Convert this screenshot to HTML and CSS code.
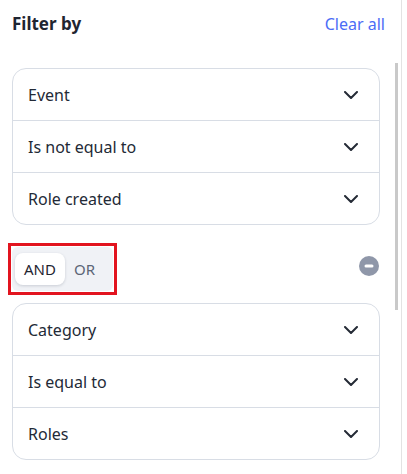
FILE: index.html
```html
<!DOCTYPE html>
<html lang="en">
<head>
<meta charset="utf-8">
<link rel="stylesheet" href="styles.css">
</head>
<body>
<div class="panel">
  <div class="header">
    <span class="title">Filter by</span>
    <a class="clear">Clear all</a>
  </div>

  <div class="card">
    <div class="row"><span>Event</span><svg class="chev" viewBox="0 0 14 8"><path d="M1 1l6 6 6-6"/></svg></div>
    <div class="row"><span>Is not equal to</span><svg class="chev" viewBox="0 0 14 8"><path d="M1 1l6 6 6-6"/></svg></div>
    <div class="row"><span>Role created</span><svg class="chev" viewBox="0 0 14 8"><path d="M1 1l6 6 6-6"/></svg></div>
  </div>

  <div class="logic">
    <div class="highlight">
      <div class="toggle">
        <span class="opt active">AND</span>
        <span class="opt">OR</span>
      </div>
    </div>
    <svg class="remove" viewBox="0 0 20 20"><circle cx="10" cy="10" r="10"/><rect x="5.5" y="8.5" width="9" height="3" rx="1.5"/></svg>
  </div>

  <div class="card">
    <div class="row"><span>Category</span><svg class="chev" viewBox="0 0 14 8"><path d="M1 1l6 6 6-6"/></svg></div>
    <div class="row"><span>Is equal to</span><svg class="chev" viewBox="0 0 14 8"><path d="M1 1l6 6 6-6"/></svg></div>
    <div class="row"><span>Roles</span><svg class="chev" viewBox="0 0 14 8"><path d="M1 1l6 6 6-6"/></svg></div>
  </div>

  <div class="scroll-thumb"></div>
</div>
</body>
</html>
```

FILE: styles.css
```css
* { box-sizing: border-box; }
html, body { margin: 0; padding: 0; background: #fff; }
body {
  font-family: "Noto Sans", "Open Sans", sans-serif;
  color: #232a36;
  width: 407px;
  height: 474px;
  overflow: hidden;
}
.panel {
  position: relative;
  width: 402px;
  height: 474px;
  border-right: 1px solid #e3e3e3;
  padding: 12px 0 0 12px;
}
.header {
  display: flex;
  justify-content: space-between;
  align-items: center;
  width: 373px;
  height: 24px;
  margin-bottom: 32px;
}
.title {
  font-weight: 700;
  font-size: 17px;
  line-height: 24px;
  color: #1f2531;
}
.clear {
  font-size: 16px;
  line-height: 24px;
  color: #4b6cf6;
}
.card {
  width: 368px;
  border: 1px solid #d8dde5;
  border-radius: 14px;
  overflow: hidden;
}
.row {
  display: flex;
  align-items: center;
  justify-content: space-between;
  height: 52px;
  padding: 0 21px 0 15px;
  font-size: 16px;
  border-top: 1px solid #d8dde5;
}
.row:first-child { border-top: none; height: 51px; }
.chev {
  width: 14px;
  height: 8px;
  fill: none;
  stroke: #252b36;
  stroke-width: 2;
  stroke-linecap: round;
  stroke-linejoin: round;
}
.logic {
  display: flex;
  justify-content: space-between;
  align-items: center;
  width: 368px;
  margin: 18px 0 8px -4px;
  padding-right: 0;
}
.highlight {
  border: 3px solid #e2141f;
  padding: 1px;
  width: 109px;
  height: 52px;
}
.toggle {
  display: flex;
  align-items: center;
  gap: 0;
  height: 100%;
  background: #f0f2f6;
  border-radius: 6px;
  padding: 2px 3px;
}
.opt {
  font-size: 15px;
  line-height: 32px;
  padding: 0 9px;
  color: #5d6677;
}
.opt.active {
  background: #fff;
  color: #1f2531;
  border-radius: 8px;
  box-shadow: 0 1px 3px rgba(30, 40, 60, 0.18);
}
.remove {
  width: 20px;
  height: 20px;
  margin-right: -3px;
  margin-bottom: 6px;
}
.remove circle { fill: #8f97a9; }
.remove rect { fill: #fff; }
.scroll-thumb {
  position: absolute;
  left: 395px;
  top: 63px;
  width: 3px;
  height: 247px;
  background: #c9c9c9;
}
```
